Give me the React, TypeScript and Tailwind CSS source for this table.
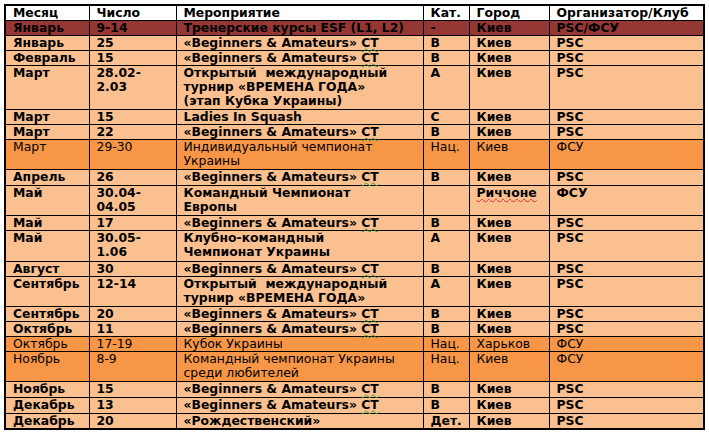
import React from 'react';

type Row = {
  m: string;
  d: React.ReactNode;
  e: React.ReactNode;
  k: string;
  c: React.ReactNode;
  o: string;
  tone: 'red' | 'peach' | 'orange';
  h: string;
};

const CT = <span className="underline decoration-wavy decoration-[#3c9a3c] decoration-1 underline-offset-[1px]">СТ</span>;
const BA = <>«Beginners &amp; Amateurs» {CT}</>;

const rows: Row[] = [
  { m: 'Январь', d: '9-14', e: 'Тренерские курсы ESF (L1, L2)', k: '-', c: 'Киев', o: 'PSC/ФСУ', tone: 'red', h: 'h-[15px]' },
  { m: 'Январь', d: '25', e: BA, k: 'B', c: 'Киев', o: 'PSC', tone: 'peach', h: 'h-[15px]' },
  { m: 'Февраль', d: '15', e: BA, k: 'B', c: 'Киев', o: 'PSC', tone: 'peach', h: 'h-[15px]' },
  {
    m: 'Март',
    d: <>28.02-<br />2.03</>,
    e: <>Открытый&nbsp; международный<br />турнир «ВРЕМЕНА ГОДА»<br />(этап Кубка Украины)</>,
    k: 'A', c: 'Киев', o: 'PSC', tone: 'peach', h: 'h-[44px]',
  },
  { m: 'Март', d: '15', e: 'Ladies In Squash', k: 'C', c: 'Киев', o: 'PSC', tone: 'peach', h: 'h-[15px]' },
  { m: 'Март', d: '22', e: BA, k: 'B', c: 'Киев', o: 'PSC', tone: 'peach', h: 'h-[15px]' },
  { m: 'Март', d: '29-30', e: <>Индивидуальный чемпионат<br />Украины</>, k: 'Нац.', c: 'Киев', o: 'ФСУ', tone: 'orange', h: 'h-[30px]' },
  { m: 'Апрель', d: '26', e: BA, k: 'B', c: 'Киев', o: 'PSC', tone: 'peach', h: 'h-[16px]' },
  {
    m: 'Май',
    d: <>30.04-<br />04.05</>,
    e: <>Командный Чемпионат<br />Европы</>,
    k: '',
    c: <span className="underline decoration-wavy decoration-[#e03030] decoration-1 underline-offset-[1px]">Риччоне</span>,
    o: 'ФСУ', tone: 'peach', h: 'h-[30px]',
  },
  { m: 'Май', d: '17', e: BA, k: 'B', c: 'Киев', o: 'PSC', tone: 'peach', h: 'h-[15px]' },
  { m: 'Май', d: <>30.05-<br />1.06</>, e: <>Клубно-командный<br />Чемпионат Украины</>, k: 'A', c: 'Киев', o: 'PSC', tone: 'peach', h: 'h-[31px]' },
  { m: 'Август', d: '30', e: BA, k: 'B', c: 'Киев', o: 'PSC', tone: 'peach', h: 'h-[15px]' },
  { m: 'Сентябрь', d: '12-14', e: <>Открытый&nbsp; международный<br />турнир «ВРЕМЕНА ГОДА»</>, k: 'A', c: 'Киев', o: 'PSC', tone: 'peach', h: 'h-[30px]' },
  { m: 'Сентябрь', d: '20', e: BA, k: 'B', c: 'Киев', o: 'PSC', tone: 'peach', h: 'h-[15px]' },
  { m: 'Октябрь', d: '11', e: BA, k: 'B', c: 'Киев', o: 'PSC', tone: 'peach', h: 'h-[15px]' },
  { m: 'Октябрь', d: '17-19', e: 'Кубок Украины', k: 'Нац.', c: 'Харьков', o: 'ФСУ', tone: 'orange', h: 'h-[15px]' },
  { m: 'Ноябрь', d: '8-9', e: <>Командный чемпионат Украины<br />среди любителей</>, k: 'Нац.', c: 'Киев', o: 'ФСУ', tone: 'orange', h: 'h-[30px]' },
  { m: 'Ноябрь', d: '15', e: BA, k: 'B', c: 'Киев', o: 'PSC', tone: 'peach', h: 'h-[16px]' },
  { m: 'Декабрь', d: '13', e: BA, k: 'B', c: 'Киев', o: 'PSC', tone: 'peach', h: 'h-[16px]' },
  { m: 'Декабрь', d: '20', e: '«Рождественский»', k: 'Дет.', c: 'Киев', o: 'PSC', tone: 'peach', h: 'h-[15px]' },
];

const toneClass = {
  red: 'bg-[#953735] font-bold',
  peach: 'bg-[#fac090] font-bold',
  orange: 'bg-[#f79646] font-normal',
};

const td = 'border border-black pl-[7px] pr-1 py-0 align-top whitespace-nowrap';

export default function App() {
  return (
    <div className="min-h-screen bg-white pl-[4px] pt-[4px]">
      <table
        className="border-collapse border-2 border-black text-black text-[12.4px] leading-[14px] table-fixed w-[701px]"
        style={{ fontFamily: '"DejaVu Sans", Verdana, sans-serif' }}
      >
        <colgroup>
          <col className="w-[84px]" />
          <col className="w-[87px]" />
          <col className="w-[247px]" />
          <col className="w-[46px]" />
          <col className="w-[80px]" />
          <col />
        </colgroup>
        <thead>
          <tr className="bg-white font-bold text-left h-[15px]">
            <th className={td}>Месяц</th>
            <th className={td}>Число</th>
            <th className={td}>Мероприятие</th>
            <th className={td}>Кат.</th>
            <th className={td}>Город</th>
            <th className={td}>Организатор/Клуб</th>
          </tr>
        </thead>
        <tbody>
          {rows.map((r, i) => (
            <tr key={i} className={`${toneClass[r.tone]} ${r.h}`}>
              <td className={td}>{r.m}</td>
              <td className={td}>{r.d}</td>
              <td className={td}>{r.e}</td>
              <td className={td}>{r.k}</td>
              <td className={td}>{r.c}</td>
              <td className={td}>{r.o}</td>
            </tr>
          ))}
        </tbody>
      </table>
    </div>
  );
}
